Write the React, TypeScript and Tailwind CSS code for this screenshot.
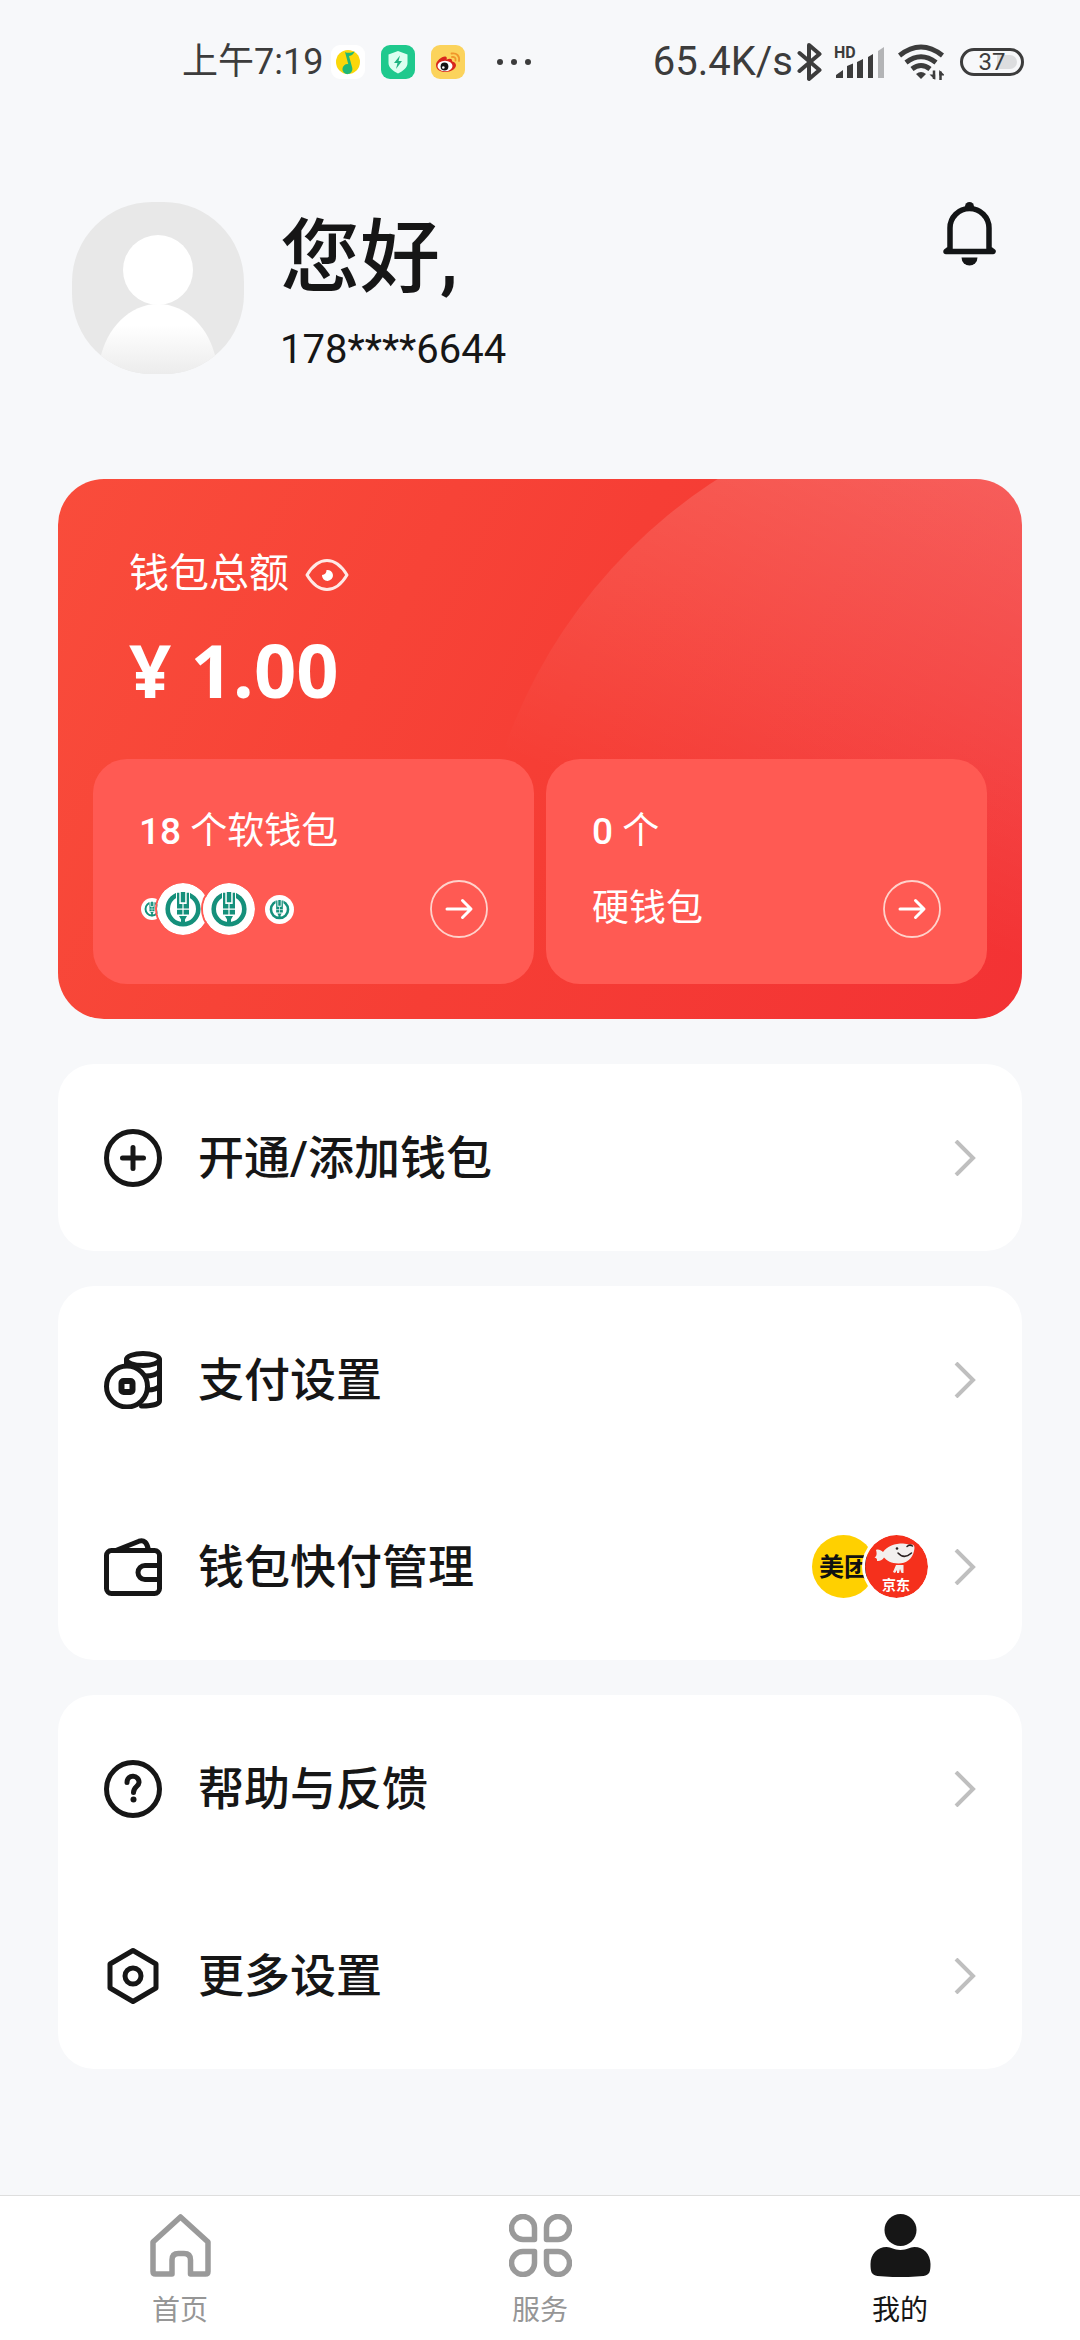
import React, { useState } from "react"

type IconProps = { className?: string }

type MenuItem = {
  label: string
  icon: React.ReactNode
  extra?: React.ReactNode
}

const MusicIcon = () => (
  <svg className="h-[34px] w-[34px]" viewBox="0 0 34 34">
    <rect width="34" height="34" rx="9" fill="#fff" />
    <circle cx="17" cy="17" r="12" fill="#fbd70a" />
    <path d="M14 7c3 1.500 6 .8 9.500-.8-.6 2.700-2.500 4.300-5.500 4.800l3.300 12a5 5 0 1 1-4-3.800z" fill="#1fb877" />
  </svg>
)

const ShieldIcon = () => (
  <svg className="h-[34px] w-[34px]" viewBox="0 0 34 34">
    <rect width="34" height="34" rx="9" fill="#1fc98d" />
    <path d="M17 6l9.500 3.500V18c0 4.500-4.500 8-9.500 10.500C12 26 7.500 22.500 7.500 18V9.500z" fill="#dcfff0" />
    <path d="M19 10.500l-6 7.500h3.500L15 24l6-8h-3.500z" fill="#1fb481" />
  </svg>
)

const WeiboIcon = () => (
  <svg className="h-[34px] w-[34px]" viewBox="0 0 34 34">
    <rect width="34" height="34" rx="9" fill="#fbd35c" />
    <path d="M5 20c0-4 6-9 9.500-8.500 1.500.3 1.500 2 1 3.200 3-1.500 6-1.200 5.500 1.600 2.500.7 4 2 4 4 0 3.700-5 6.700-10.500 6.700S5 24.500 5 20z" fill="#d8261c" />
    <ellipse cx="14" cy="21" rx="7.500" ry="5.200" fill="#fff" />
    <circle cx="13.500" cy="21.500" r="3.900" fill="#151515" />
    <circle cx="12.300" cy="22.500" r="1.300" fill="#fff" />
    <path d="M20.500 8.500c5-1 8.500 2.500 7.500 7.500M21 12c2.500-.4 4 1.200 3.500 3.500" fill="none" stroke="#f0962a" strokeWidth="1.800" strokeLinecap="round" />
  </svg>
)

const BluetoothIcon = () => (
  <svg className="h-10 w-[25px]" viewBox="0 0 25 40" fill="none" stroke="#3c3c3c" strokeWidth="4" strokeLinejoin="round" strokeLinecap="round">
    <path d="M2.500 11l20 17L12 37V3l10.500 9L2.500 29" />
  </svg>
)

const SignalIcon = () => (
  <svg className="h-10 w-[52px] overflow-visible" viewBox="0 -4 52 40" fill="#3c3c3c">
    <text x="0" y="12" fontSize="16" fontWeight="700" fontFamily="Roboto, sans-serif">HD</text>
    <path d="M2 32v-3l7-5v8zM13 32V20l6-2.500V32zM23 32V16l6-3v19zM34 32V11l5-3v24z" />
    <path d="M44 32V5l6-4v31z" fill="#b3b4b6" />
  </svg>
)

const WifiIcon = () => (
  <svg className="h-9 w-[46px]" viewBox="0 0 46 36" fill="none" stroke="#3c3c3c" strokeWidth="5">
    <path d="M1.500 11.500Q23-5.500 44.500 11.500" />
    <path d="M8 18.500Q23 7 38 18.500" />
    <path d="M14 25Q23 18 32 25" />
    <path d="M18 30q5-4 10 0l-5 5z" fill="#3c3c3c" stroke="none" />
    <path d="M36 35v-8.500M42.500 27.500V36" strokeWidth="2.500" />
    <path d="M31.500 30.500L37.200 36v-5.500zM41.300 26v5.500H47z" fill="#3c3c3c" stroke="none" />
  </svg>
)

const AvatarIcon = () => (
  <svg className="h-[172px] w-[172px] shrink-0" viewBox="0 0 172 172">
    <defs>
      <clipPath id="avatarClip">
        <rect width="172" height="172" rx="80" />
      </clipPath>
      <linearGradient id="avatarBody" x1="0" y1="0" x2="0" y2="1">
        <stop offset="0.3" stopColor="#fff" />
        <stop offset="1" stopColor="#ececec" />
      </linearGradient>
    </defs>
    <g clipPath="url(#avatarClip)">
      <rect width="172" height="172" fill="#e8e8e8" />
      <circle cx="86" cy="68" r="35" fill="#fff" />
      <path d="M28 172v-14c6-32 30-56 58-56s52 24 58 56v14z" fill="url(#avatarBody)" />
    </g>
  </svg>
)

const BellIcon = () => (
  <svg className="h-[66px] w-[60px]" viewBox="0 0 60 66">
    <path d="M10 46.500V26a19.500 19.500 0 0 1 39 0v20.500l4 3H6z" fill="none" stroke="#131516" strokeWidth="5.500" strokeLinejoin="round" />
    <circle cx="29.500" cy="4.500" r="4.500" fill="#131516" />
    <path d="M21.500 55.500h16a8 8 0 0 1-16 0z" fill="#131516" />
  </svg>
)

const EyeIcon = () => (
  <svg className="h-9 w-11" viewBox="0 0 44 36">
    <path d="M2 19C8 9 14 4.500 22 4.500S36 9 42 19c-6 10-12 14.500-20 14.500S8 29 2 19z" fill="none" stroke="#ffe9e6" strokeWidth="3" strokeLinejoin="round" />
    <path d="M21.500 14c0 3-1.500 4.500-4.500 5a5.500 5.500 0 1 0 4.500-5z" fill="#fff" />
  </svg>
)

const BankLogo = ({ className }: IconProps) => (
  <svg className={className} viewBox="0 0 52 52">
    <circle cx="26" cy="26" r="26" fill="#fff" />
    <circle cx="26" cy="26" r="15.300" fill="none" stroke="#15907b" strokeWidth="4.600" />
    <path d="M19 7h14v26H19z" fill="#fff" />
    <g fill="#15907b">
      <path d="M23.800 9h4.400v10.300h-4.400z" />
      <path d="M20 9.800h2.300v11.200h7.400V9.800H32V31.500h-12z" />
      <path d="M22 33h8l-2 3.500V43h-4v-6.500z" />
    </g>
    <path d="M26 21v11M20 26.200h12" stroke="#fff" strokeWidth="1.200" />
  </svg>
)

const ArrowCircle = () => (
  <svg className="h-[58px] w-[58px]" viewBox="0 0 58 58" fill="none" stroke="#fff" strokeLinecap="round" strokeLinejoin="round">
    <circle cx="29" cy="29" r="28" stroke="#ffd2cb" strokeWidth="1.800" />
    <path d="M17 29h23M32.500 20.500L41 29l-8.500 8.500" strokeWidth="3" />
  </svg>
)

const Chevron = () => (
  <svg className="h-9 w-[22px]" viewBox="0 0 22 36" fill="none" stroke="#bfbfbf" strokeWidth="4">
    <path d="M2 1l17 17L2 35" />
  </svg>
)

const lineIcon = {
  className: "h-[58px] w-[58px] shrink-0",
  viewBox: "0 0 58 58",
  fill: "none",
  stroke: "#161616",
  strokeWidth: 5,
  strokeLinecap: "round",
  strokeLinejoin: "round",
} as const

const AddIcon = () => (
  <svg {...lineIcon}>
    <circle cx="29" cy="29" r="26.500" />
    <path d="M29 18.500v21M18.500 29h21" />
  </svg>
)

const CoinsIcon = () => (
  <svg {...lineIcon}>
    <ellipse cx="39" cy="8.500" rx="16.500" ry="6" />
    <path d="M22.500 9v6M55.500 9v41c0 3-8 5-18 5" />
    <path d="M55.500 20c-2 3-7 5-14.500 5M55.500 35c-2 2.500-6 4-12 4" />
    <circle cx="23" cy="35.500" r="20.500" fill="#fff" />
    <rect x="17.500" y="30" width="11" height="11" rx="2" strokeWidth="6" />
  </svg>
)

const WalletIcon = () => (
  <svg {...lineIcon}>
    <rect x="2.500" y="12.500" width="53" height="43" rx="5" />
    <path d="M55.500 27.500H41a7 7 0 0 0 0 14h14.500" />
    <path d="M13 12L35 3.200c5-1.700 8 1.300 9.500 8.800" />
  </svg>
)

const HelpIcon = () => (
  <svg {...lineIcon}>
    <circle cx="29" cy="29" r="26.500" />
    <path d="M23 22.500c0-9 12.500-7.500 12 0-.3 4-5.500 4.500-5.500 10" />
    <circle cx="29.500" cy="39.500" r="3" fill="#161616" stroke="none" />
  </svg>
)

const HexIcon = () => (
  <svg {...lineIcon}>
    <path d="M29 3.500L52 17v24L29 54.500 6 41V17z" />
    <circle cx="29" cy="29" r="8" />
  </svg>
)

const MeituanBadge = () => (
  <svg className="h-[63px] w-[63px]" viewBox="0 0 63 63">
    <circle cx="31.500" cy="31.500" r="31.500" fill="#ffd000" />
    <text x="7" y="41" fontSize="25" fontWeight="700" fill="#111" fontFamily="'Noto Sans CJK SC', sans-serif">美团</text>
  </svg>
)

const JdBadge = () => (
  <svg className="-ml-[10px] h-[63px] w-[63px] rounded-full ring-3 ring-white" viewBox="0 0 63 63">
    <circle cx="31.500" cy="31.500" r="31.500" fill="#f5301c" />
    <path d="M11 15c2-1 5 0 7 2C22 11 30 8.500 38 8.500c3 0 5 1.500 9 1 2.500 0 3 3 2 6.500-1.500 8-8 12.500-15.500 12.500-7 0-12-3-14.500-6-1.500 2.500-4 4-7 3.500.5-2-.5-3-2.500-3.500 2.500-1.500 2.500-4 1.500-7.500z" fill="#f3efee" />
    <path d="M33 18c4 4.500 9 4 13.500 0M42 11.500c1.500-1.500 4-1.500 5.500-.5" fill="none" stroke="#2b2020" strokeWidth="1.500" strokeLinecap="round" />
    <circle cx="32" cy="13.500" r="1.300" fill="#2b2020" />
    <path d="M31 30l-3 7 2 1 2-3v3h2l1-4 1.500 4h2V30z" fill="#f3efee" />
    <text x="17" y="55" fontSize="14" fontWeight="700" fill="#fff" fontFamily="'Noto Sans CJK SC', sans-serif">京东</text>
  </svg>
)

const HomeIcon = () => (
  <svg className="h-[63px] w-[63px]" viewBox="0 0 63 63" fill="none" stroke="#9a9a9a" strokeWidth="5.500" strokeLinejoin="round">
    <path d="M31.500 3l27.500 25v29.500q0 2.500-2.500 2.500H41.500V46q0-6.500-6.500-6.500h-5.500q-6.500 0-6.500 6.500v14H6.500q-2.500 0-2.500-2.500V28z" />
  </svg>
)

const ServiceIcon = () => (
  <svg className="h-[63px] w-[63px]" viewBox="0 0 63 63" fill="none" stroke="#9a9a9a" strokeWidth="5.500" strokeLinejoin="round">
    <path d="M25.500 25.500H14.300a11.500 11.500 0 1 1 11.200-11.200z" />
    <path d="M37.500 25.500V14.300a11.500 11.500 0 1 1 11.200 11.200z" />
    <path d="M25.500 37.500v11.200a11.500 11.500 0 1 1-11.200-11.200z" />
    <path d="M37.500 37.500h11.200a11.500 11.500 0 1 1-11.200 11.200z" />
  </svg>
)

const MineIcon = () => (
  <svg className="h-[63px] w-[63px]" viewBox="0 0 63 63" fill="#161616">
    <circle cx="31.500" cy="16" r="16" />
    <path d="M17.500 33c5 0 7 3 14 3s9-3 14-3c9 0 16 7 16 17 0 8-1 11-7 12-14 1.500-32 1.500-46 0-6-1-7-4-7-12 0-10 7-17 16-17z" />
  </svg>
)

const groups: MenuItem[][] = [
  [{ label: "开通/添加钱包", icon: <AddIcon /> }],
  [
    { label: "支付设置", icon: <CoinsIcon /> },
    {
      label: "钱包快付管理",
      icon: <WalletIcon />,
      extra: (
        <span className="flex">
          <MeituanBadge />
          <JdBadge />
        </span>
      ),
    },
  ],
  [
    { label: "帮助与反馈", icon: <HelpIcon /> },
    { label: "更多设置", icon: <HexIcon /> },
  ],
]

const tabs = [
  { label: "首页", icon: <HomeIcon /> },
  { label: "服务", icon: <ServiceIcon /> },
  { label: "我的", icon: <MineIcon /> },
]

const StatusBar = () => (
  <div className="flex h-[124px] items-center justify-between pr-14 pl-[182px] text-[#3c3c3c]">
    <div className="flex items-center gap-4">
      <div className="flex items-center gap-2">
        <span className="text-4xl">上午7:19</span>
        <MusicIcon />
      </div>
      <ShieldIcon />
      <WeiboIcon />
      <div className="ml-4 flex gap-2">
        {[0, 1, 2].map(dot => (
          <span key={dot} className="h-[6px] w-[6px] rounded-full bg-[#3c3c3c]" />
        ))}
      </div>
    </div>
    <div className="flex items-center gap-3">
      <div className="flex items-center gap-1">
        <span className="text-[40px]">65.4K/s</span>
        <BluetoothIcon />
      </div>
      <SignalIcon />
      <WifiIcon />
      <div className="relative ml-1 flex h-7 w-16 items-center justify-center rounded-full border-3 border-[#3c3c3c]">
        <span className="absolute inset-y-1 right-1 w-5 rounded-r-full bg-[#dcdddf]" />
        <span className="relative text-2xl">37</span>
      </div>
    </div>
  </div>
)

const WalletCard = () => {
  const [visible, setVisible] = useState<boolean>(true)

  return (
    <section className="relative mt-[77px] overflow-hidden rounded-[46px] bg-linear-115 from-[#f94c3b] via-[#f63e35] to-[#f33234] p-[35px] text-white">
      <div className="absolute -top-[84px] -right-[512px] h-[1060px] w-[1060px] rounded-full bg-linear-[202deg] from-white/20 from-18% to-white/0 to-52%" />
      <div className="relative px-9 pt-[30px]">
        <div className="flex items-center gap-4 leading-[60px]">
          <h2 className="text-[40px]">钱包总额</h2>
          <button aria-label="显示金额" onClick={() => setVisible(prev => !prev)}>
            <EyeIcon />
          </button>
        </div>
        <p className="mt-[18px] font-['Open_Sans',sans-serif] text-[74px] leading-[96px] font-bold">
          {visible ? "¥ 1.00" : "****"}
        </p>
      </div>
      <div className="relative mt-[41px] grid grid-cols-2 gap-3">
        <button className="rounded-[34px] bg-[#ff5a53] px-[46px] pt-[43px] pb-[46px] text-left">
          <span className="block text-[37px] leading-[60px]">
            <span className="font-medium">18</span> 个软钱包
          </span>
          <span className="mt-[18px] flex items-center justify-between">
            <span className="flex items-center">
              <BankLogo className="ml-[2px] h-[22px] w-[22px]" />
              <BankLogo className="relative -ml-[6px] h-[52px] w-[52px] rounded-full ring-2 ring-[#ff5a53]" />
              <BankLogo className="relative -ml-[6px] h-[52px] w-[52px] rounded-full ring-2 ring-[#ff5a53]" />
              <BankLogo className="ml-[10px] h-[29px] w-[29px]" />
            </span>
            <ArrowCircle />
          </span>
        </button>
        <button className="rounded-[34px] bg-[#ff5a53] px-[46px] pt-[43px] pb-[46px] text-left">
          <span className="block text-[37px] leading-[60px]">
            <span className="font-medium">0</span> 个
          </span>
          <span className="mt-[18px] flex items-center justify-between text-[37px]">
            <span>硬钱包</span>
            <ArrowCircle />
          </span>
        </button>
      </div>
    </section>
  )
}

export default function App() {
  const [activeTab, setActiveTab] = useState<string>("我的")

  return (
    <div className="flex min-h-screen flex-col bg-[#f7f8fa] font-[Roboto,'Noto_Sans_CJK_SC',sans-serif] text-[#161616]">
      <StatusBar />

      <header className="flex items-start pt-[78px] pr-20 pl-18">
        <AvatarIcon />
        <div className="ml-9 flex-auto py-2">
          <h1 className="text-[80px] leading-[96px] font-medium">您好,</h1>
          <p className="text-[40px] leading-[88px]">178****6644</p>
        </div>
        <button aria-label="消息">
          <BellIcon />
        </button>
      </header>

      <main className="px-[58px]">
        <WalletCard />
        <div className="mt-[45px] flex flex-col gap-[35px]">
          {groups.map((items, idx) => (
            <ul key={idx} className="rounded-[36px] bg-white">
              {items.map(item => (
                <li key={item.label}>
                  <button className="flex h-[187px] w-full items-center px-[46px]">
                    {item.icon}
                    <span className="ml-9 flex-auto pt-[2px] text-left text-[46px] font-medium">{item.label}</span>
                    {item.extra}
                    <span className="ml-[26px]">
                      <Chevron />
                    </span>
                  </button>
                </li>
              ))}
            </ul>
          ))}
        </div>
      </main>

      <nav className="mt-auto grid h-[145px] grid-cols-3 border-t-1 border-[#dedede] bg-white">
        {tabs.map(tab => (
          <button
            key={tab.label}
            className={`flex flex-col items-center pt-[18px] text-[28px] ${
              activeTab === tab.label ? "text-[#161616]" : "text-[#969696]"
            }`}
            onClick={() => setActiveTab(tab.label)}
          >
            {tab.icon}
            <span className="mt-[14px] leading-10">{tab.label}</span>
          </button>
        ))}
      </nav>
    </div>
  )
}
